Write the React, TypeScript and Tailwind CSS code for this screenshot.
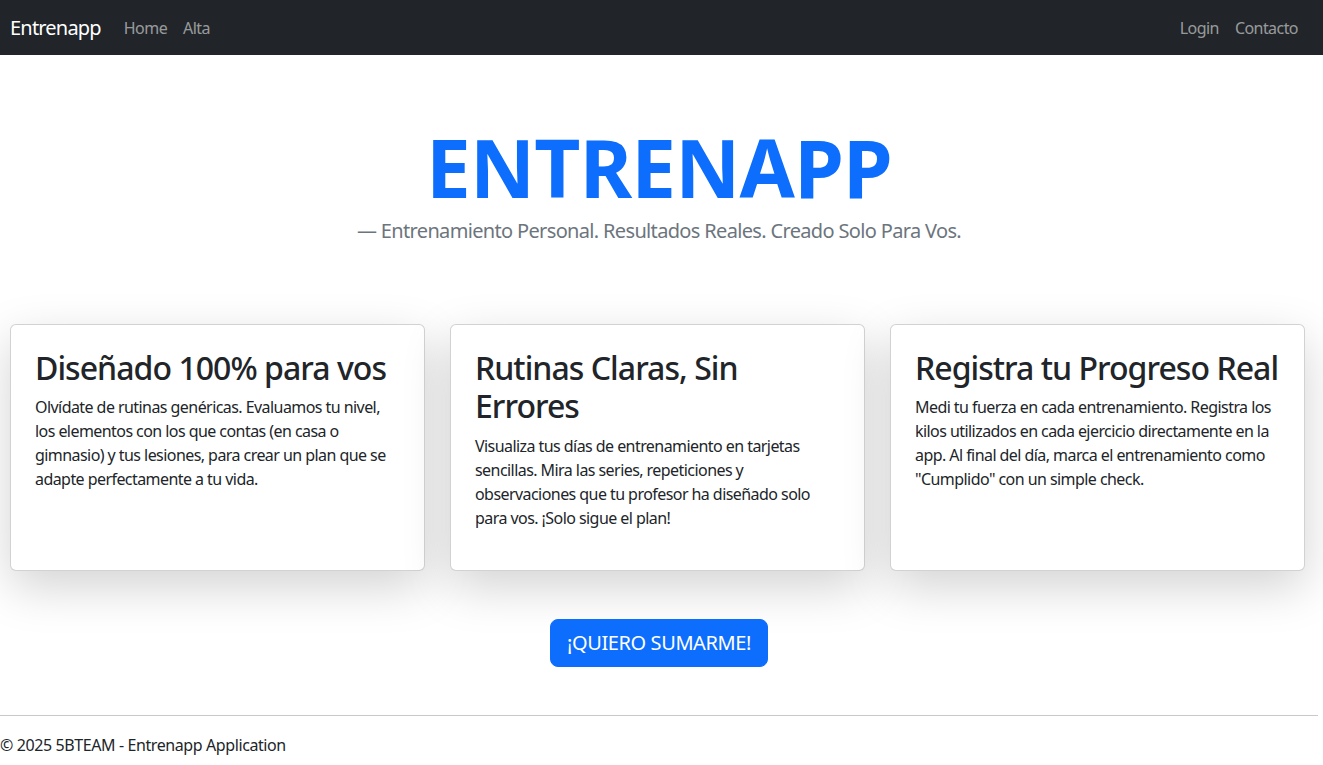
import React from 'react';

const cards = [
  {
    title: 'Diseñado 100% para vos',
    text: 'Olvídate de rutinas genéricas. Evaluamos tu nivel, los elementos con los que contas (en casa o gimnasio) y tus lesiones, para crear un plan que se adapte perfectamente a tu vida.',
  },
  {
    title: 'Rutinas Claras, Sin Errores',
    text: 'Visualiza tus días de entrenamiento en tarjetas sencillas. Mira las series, repeticiones y observaciones que tu profesor ha diseñado solo para vos. ¡Solo sigue el plan!',
  },
  {
    title: 'Registra tu Progreso Real',
    text: 'Medi tu fuerza en cada entrenamiento. Registra los kilos utilizados en cada ejercicio directamente en la app. Al final del día, marca el entrenamiento como "Cumplido" con un simple check.',
  },
];

export default function App() {
  return (
    <div className="min-h-screen bg-white text-[#212529] font-['Noto_Sans',sans-serif] tracking-[-0.035em]">
      {/* Navbar */}
      <nav className="h-[55px] bg-[#212529] flex items-center justify-between pl-[10px] pr-[17px]">
        <div className="flex items-center">
          <a className="text-white text-[20px] mr-[15px] tracking-[-0.04em]">Entrenapp</a>
          <a className="text-[rgba(255,255,255,0.55)] text-[16px] px-[8px]">Home</a>
          <a className="text-[rgba(255,255,255,0.55)] text-[16px] px-[8px]">Alta</a>
        </div>
        <div className="flex items-center">
          <a className="text-[rgba(255,255,255,0.55)] text-[16px] px-[8px]">Login</a>
          <a className="text-[rgba(255,255,255,0.55)] text-[16px] px-[8px]">Contacto</a>
        </div>
      </nav>

      <main className="mr-[5px]">
        {/* Hero */}
        <header className="pt-[64px] text-center">
          <h1 className="text-[80px] leading-[1.2] font-bold text-[#0d6efd] m-0 tracking-[-0.01em]">ENTRENAPP</h1>
          <p className="text-[20px] leading-[30px] text-[#6c757d] mt-[1px] tracking-[-0.033em]">
            — Entrenamiento Personal. Resultados Reales. Creado Solo Para Vos.
          </p>
        </header>

        {/* Cards */}
        <section className="mt-[78px] pl-[10px] pr-[13px] grid grid-cols-3 gap-[25px]">
          {cards.map((c) => (
            <div
              key={c.title}
              className="bg-white border border-[rgba(0,0,0,0.175)] rounded-[6px] p-[24px] shadow-[0_16px_48px_rgba(0,0,0,0.175)]"
            >
              <h2 className="text-[32px] leading-[1.2] font-medium mb-[8px] tracking-[-0.03em]">{c.title}</h2>
              <p className="text-[16px] leading-[24px] mb-[16px]">{c.text}</p>
            </div>
          ))}
        </section>

        {/* CTA */}
        <div className="mt-[48px] flex justify-center">
          <button className="bg-[#0d6efd] text-white text-[20px] leading-[30px] px-[16px] py-[8px] rounded-[8px] border border-[#0d6efd] tracking-[-0.02em]">
            ¡QUIERO SUMARME!
          </button>
        </div>

        {/* Footer */}
        <footer className="mt-[48px]">
          <hr className="border-0 border-t border-[#c8c9ca]" />
          <p className="text-[16px] leading-[24px] mt-[17px] tracking-[-0.025em]">© 2025 5BTEAM - Entrenapp Application</p>
        </footer>
      </main>
    </div>
  );
}
